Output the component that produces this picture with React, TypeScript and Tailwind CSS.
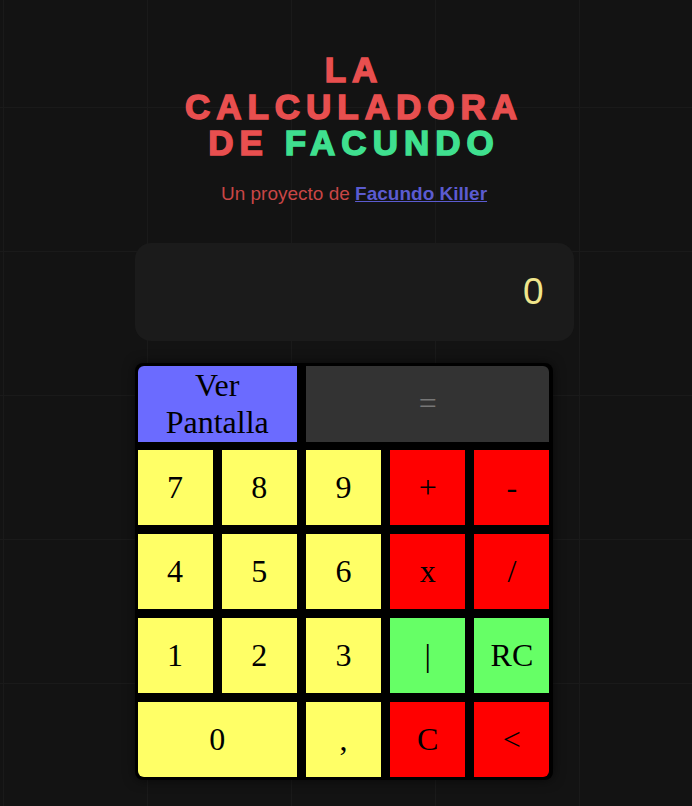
import React, { useState } from "react";

type Key = {
  label: string;
  color: string;
  span?: string;
  corner?: string;
};

const keys: Key[] = [
  { label: "7", color: "bg-[#ffff66]" },
  { label: "8", color: "bg-[#ffff66]" },
  { label: "9", color: "bg-[#ffff66]" },
  { label: "+", color: "bg-[#ff0000]" },
  { label: "-", color: "bg-[#ff0000]" },
  { label: "4", color: "bg-[#ffff66]" },
  { label: "5", color: "bg-[#ffff66]" },
  { label: "6", color: "bg-[#ffff66]" },
  { label: "x", color: "bg-[#ff0000]" },
  { label: "/", color: "bg-[#ff0000]" },
  { label: "1", color: "bg-[#ffff66]" },
  { label: "2", color: "bg-[#ffff66]" },
  { label: "3", color: "bg-[#ffff66]" },
  { label: "|", color: "bg-[#66ff66]" },
  { label: "RC", color: "bg-[#66ff66]" },
  { label: "0", color: "bg-[#ffff66]", span: "col-span-2", corner: "rounded-bl-md" },
  { label: ",", color: "bg-[#ffff66]" },
  { label: "C", color: "bg-[#ff0000]" },
  { label: "<", color: "bg-[#ff0000]", corner: "rounded-br-md" },
];

const App = () => {
  const [display, setDisplay] = useState("0");

  return (
    <div className="min-h-screen bg-[#131313] [background-image:linear-gradient(to_right,#1a1a1a_1px,transparent_1px),linear-gradient(to_bottom,#1a1a1a_1px,transparent_1px)] [background-size:144px_144px] [background-position:3px_107px] pl-4 pt-[52px] pb-6">
      <div className="flex flex-col items-center">
        <h1 className="text-center font-['Liberation_Sans',Arial,sans-serif] font-black text-[35px] leading-[36.5px] tracking-[6px] [-webkit-text-stroke-width:1.5px] text-[#e84f4f] uppercase">
          La
          <br />
          Calculadora
          <br />
          De <span className="text-[#3fe08f]">Facundo</span>
        </h1>
        <p className="mt-[18px] font-['Liberation_Sans',Arial,sans-serif] text-[19px] leading-[27px] text-[#c84646]">
          Un proyecto de{" "}
          <a href="#" className="font-bold underline text-[#5b5bd0]">
            Facundo Killer
          </a>
        </p>

        <div className="mt-9 w-[439px] flex flex-col items-start">
          <div className="w-full h-[98px] rounded-2xl bg-[#1b1b1b] flex items-center justify-end pr-[30px]">
            <span className="font-['Liberation_Sans',Arial,sans-serif] text-[37px] text-[#f0e68c]">
              {display}
            </span>
          </div>

          <div className="mt-[22px] w-[418px] rounded-lg bg-black p-[3px] shadow-[0_0_12px_rgba(0,0,0,0.6)]">
            <div className="grid grid-cols-5 auto-rows-[75px] gap-[9px] font-['Liberation_Serif','Times_New_Roman',serif] text-[32px] leading-[37px] text-black">
              <button
                className="col-span-2 h-[76px] rounded-tl-md bg-[#6b6bff] flex items-center justify-center text-center"
                onClick={() => setDisplay(display)}
              >
                Ver
                <br />
                Pantalla
              </button>
              <button className="col-span-3 h-[76px] rounded-tr-md bg-[#333333] text-[#777777] flex items-center justify-center">
                =
              </button>
              {keys.map((k) => (
                <button
                  key={k.label}
                  className={`${k.span ?? ""} ${k.corner ?? ""} ${k.color} flex items-center justify-center`}
                  onClick={() =>
                    /[0-9]/.test(k.label)
                      ? setDisplay(display === "0" ? k.label : display + k.label)
                      : k.label === "C"
                      ? setDisplay("0")
                      : null
                  }
                >
                  {k.label}
                </button>
              ))}
            </div>
          </div>
        </div>
      </div>
    </div>
  );
};

export default App;
